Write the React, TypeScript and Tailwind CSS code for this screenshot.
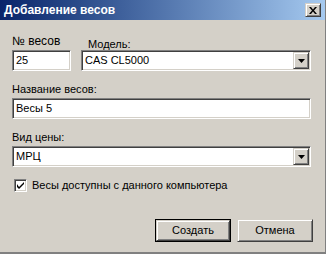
import React from 'react';

const sunken =
    'border border-t-[#808080] border-l-[#808080] border-r-white border-b-white shadow-[inset_1px_1px_0_#404040,inset_-1px_-1px_0_#d4d0c8] bg-white';
const raised =
    'border border-t-[#d4d0c8] border-l-[#d4d0c8] border-r-[#404040] border-b-[#404040] shadow-[inset_1px_1px_0_#ffffff,inset_-1px_-1px_0_#808080] bg-[#d4d0c8]';

const DropArrow: React.FC = () => (
    <div className={`${raised} w-[16px] h-[17px] flex items-center justify-center`}>
        <svg width="7" height="4" viewBox="0 0 7 4">
            <path d="M0 0h7L3.5 4z" fill="#000" />
        </svg>
    </div>
);

const Combo: React.FC<{ value: string; className?: string }> = ({ value, className }) => (
    <div className={`${sunken} h-[21px] flex items-center justify-between pl-[3px] pr-[1px] ${className ?? ''}`}>
        <span>{value}</span>
        <DropArrow />
    </div>
);

const Button: React.FC<{ label: string; isDefault?: boolean }> = ({ label, isDefault }) => (
    <div className={`w-[76px] h-[23px] ${isDefault ? 'border border-black' : ''}`}>
        <div className={`${raised} w-full h-full flex items-center justify-center`}>{label}</div>
    </div>
);

export default function App() {
    return (
        <div
            className="w-[326px] h-[254px] bg-[#d4d0c8] border-r border-b-2 border-[#808080] text-[11px] text-black flex flex-col"
            style={{ fontFamily: '"Liberation Sans", Arial, sans-serif' }}
        >
            <div className="h-[20px] shrink-0 bg-gradient-to-r from-[#0a246a] to-[#a6caf0] flex items-center justify-between pl-[4px] pr-[4px]">
                <span className="text-white font-bold text-[12px]">Добавление весов</span>
                <div className={`${raised} w-[16px] h-[14px] flex items-center justify-center`}>
                    <svg width="8" height="7" viewBox="0 0 8 7">
                        <path d="M0 0h2l2 2.5L6 0h2L5 3.5 8 7H6L4 4.5 2 7H0l3-3.5z" fill="#000" />
                    </svg>
                </div>
            </div>

            <div className="pl-[12px] pr-[14px] flex flex-col">
                <div className="flex gap-[10px] mt-[12px]">
                    <div className="flex flex-col w-[59px]">
                        <span className="h-[18px] leading-[18px] text-[12px]">№ весов</span>
                        <div className={`${sunken} h-[21px] flex items-center pl-[3px]`}>25</div>
                    </div>
                    <div className="flex flex-col flex-1">
                        <span className="h-[18px] leading-[18px] pt-[3px] pl-[7px]">Модель:</span>
                        <Combo value="CAS CL5000" />
                    </div>
                </div>

                <span className="mt-[10px] h-[16px] leading-[16px]">Название весов:</span>
                <div className={`${sunken} h-[21px] flex items-center pl-[3px] mt-[1px]`}>Весы 5</div>

                <span className="mt-[10px] h-[16px] leading-[16px]">Вид цены:</span>
                <Combo value="МРЦ" className="mt-[1px]" />

                <div className="flex items-center mt-[10px] pl-[2px]">
                    <div className={`${sunken} w-[13px] h-[13px] flex items-center justify-center`}>
                        <svg width="7" height="7" viewBox="0 0 7 7">
                            <path d="M0 2v3l2 2 5-5V0L2 5z" fill="#000" />
                        </svg>
                    </div>
                    <span className="ml-[5px]">Весы доступны с данного компьютера</span>
                </div>

                <div className="flex justify-end gap-[6px] mt-[25px] -mr-[2px]">
                    <Button label="Создать" isDefault />
                    <Button label="Отмена" />
                </div>
            </div>
        </div>
    );
}
